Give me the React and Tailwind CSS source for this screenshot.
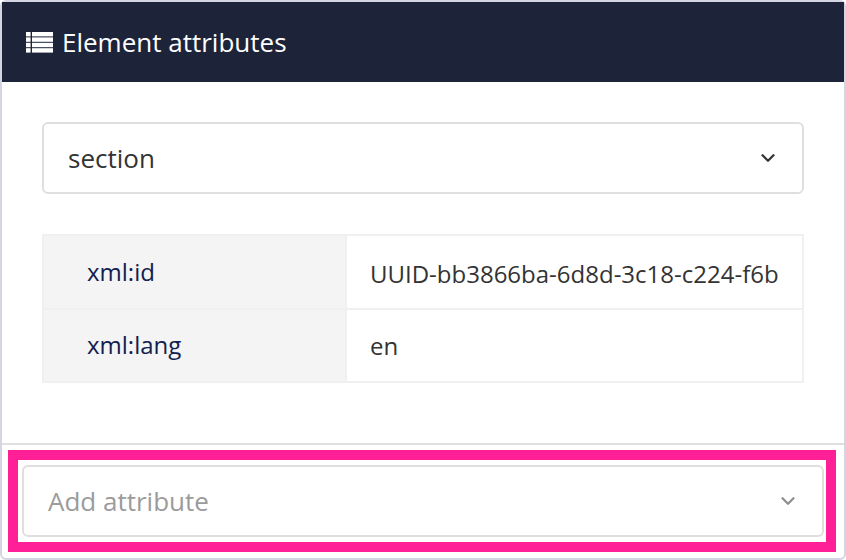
import { ChevronDown } from 'lucide-react';

const attributes = [
  { name: 'xml:id', value: 'UUID-bb3866ba-6d8d-3c18-c224-f6b', nameClass: '', valueClass: 'pt-[3px]' },
  { name: 'xml:lang', value: 'en', nameClass: 'pb-[2px]', valueClass: '' },
];

const ListIcon = () => (
  <svg width="27" height="21" viewBox="0 0 27 21" fill="currentColor" className="shrink-0">
    <rect x="0" y="0" width="4.6" height="4.4" />
    <rect x="6" y="0" width="21" height="4.4" />
    <rect x="0" y="5.4" width="4.6" height="4.4" />
    <rect x="6" y="5.4" width="21" height="4.4" />
    <rect x="0" y="10.8" width="4.6" height="4.4" />
    <rect x="6" y="10.8" width="21" height="4.4" />
    <rect x="0" y="16.2" width="4.6" height="4.4" />
    <rect x="6" y="16.2" width="21" height="4.4" />
  </svg>
);

const Select = ({ label, muted }) => (
  <div className={`flex h-[72px] items-center justify-between rounded-md border-2 border-[#dfdfdf] bg-white pl-6 pr-[23px] text-[26px] ${muted ? 'text-[#9b9b9b]' : 'text-[#333]'}`}>
    <span>{label}</span>
    <ChevronDown size={22} strokeWidth={2.5} className={muted ? 'text-[#8f8f8f]' : 'text-[#333]'} />
  </div>
);

export default function App() {
  return (
    <div className="h-[560px] w-[846px] bg-white font-['Open_Sans',sans-serif]">
      <div className="flex h-full flex-col rounded-md border-2 border-[#d3d5e3]">
        <div className="flex h-[80px] shrink-0 items-center gap-[9px] bg-[#1d243a] pl-[24px] text-[26px] text-white">
          <ListIcon />
          <span>Element attributes</span>
        </div>

        <div className="flex flex-1 flex-col gap-10 px-10 pt-10">
          <Select label="section" />

          <div className="border-2 border-[#f0f0f0]">
            {attributes.map((attr, i) => (
              <div key={attr.name} className={`flex text-[24px] ${i > 0 ? 'h-[73px] border-t-2 border-[#f0f0f0]' : 'h-[72px]'}`}>
                <div className={`flex w-[303px] shrink-0 items-center border-r-2 border-[#f0f0f0] bg-[#f4f4f4] pl-[43px] text-[#13204d] ${attr.nameClass}`}>
                  {attr.name}
                </div>
                <div className={`flex flex-1 items-center overflow-hidden whitespace-nowrap bg-white pl-[23px] text-[#333] ${attr.valueClass}`}>
                  {attr.value}
                </div>
              </div>
            ))}
          </div>
        </div>

        <div className="shrink-0 border-t-2 border-[#dfdfdf] pb-1.5 pl-1.5 pr-2 pt-[5px]">
          <div className="border-[10px] border-[#ff1f96] py-[5px] pl-1 pr-[2px]">
            <Select label="Add attribute" muted />
          </div>
        </div>
      </div>
    </div>
  );
}
